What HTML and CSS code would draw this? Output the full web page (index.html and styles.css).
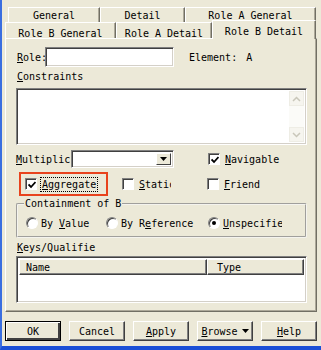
FILE: index.html
```html
<!DOCTYPE html>
<html lang="en">
<head>
    <meta charset="UTF-8">
    <title>Association Properties</title>
    <link rel="stylesheet" href="styles.css">
</head>
<body>
    <div class="window">
        <!-- tab rows -->
        <div class="tabs">
            <div class="tab-row row1">
                <div class="tab w92">General</div>
                <div class="tab w85">Detail</div>
                <div class="tab w131">Role A General</div>
            </div>
            <div class="tab-row row2">
                <div class="tab w111">Role B General</div>
                <div class="tab w96">Role A Detail</div>
                <div class="tab w104 selected">Role B Detail</div>
            </div>
        </div>

        <!-- page -->
        <div class="panel">
            <div class="row role-row">
                <span class="label role-label"><u>R</u>ole:</span>
                <span class="field role-input"></span>
                <span class="element">Element:</span>
                <span class="element-value">A</span>
            </div>

            <div class="caption"><u>C</u>onstraints</div>
            <div class="field memo">
                <div class="scrollbar">
                    <span class="sb-btn">
                        <svg viewBox="0 0 9 6" width="9" height="6"><path d="M1 5 L4.5 1.5 L8 5" fill="none" stroke="#c9c7ba" stroke-width="1.5"/></svg>
                    </span>
                    <span class="sb-btn">
                        <svg viewBox="0 0 9 6" width="9" height="6"><path d="M1 1 L4.5 4.5 L8 1" fill="none" stroke="#c9c7ba" stroke-width="1.5"/></svg>
                    </span>
                </div>
            </div>

            <div class="row multi-row">
                <span class="label multi-label"><u>M</u>ultiplic</span>
                <span class="field combo">
                    <span class="combo-btn">
                        <svg viewBox="0 0 7 4" width="7" height="4"><path d="M0 0 H7 L3.5 4 Z" fill="#000"/></svg>
                    </span>
                </span>
                <span class="checkitem navigable">
                    <span class="check"><svg viewBox="0 0 8 8" width="8" height="8"><path d="M0.5 3.5 L3 6 L7.5 1" fill="none" stroke="#000" stroke-width="1.8"/></svg></span>
                    <span><u>N</u>avigable</span>
                </span>
            </div>

            <div class="row check-row">
                <div class="highlight">
                    <span class="check"><svg viewBox="0 0 8 8" width="8" height="8"><path d="M0.5 3.5 L3 6 L7.5 1" fill="none" stroke="#000" stroke-width="1.8"/></svg></span>
                    <span class="focus"><u>A</u>ggregate</span>
                </div>
                <span class="checkitem static">
                    <span class="check"></span>
                    <span class="clip"><u>S</u>tatic</span>
                </span>
                <span class="checkitem friend">
                    <span class="check"></span>
                    <span><u>F</u>riend</span>
                </span>
            </div>

            <fieldset class="group">
                <legend>Containment of B</legend>
                <div class="radios">
                    <span class="radio-item w80">
                        <span class="radio"></span>
                        <span>By <u>V</u>alue</span>
                    </span>
                    <span class="radio-item w102">
                        <span class="radio"></span>
                        <span>By R<u>e</u>ference</span>
                    </span>
                    <span class="radio-item">
                        <span class="radio on"></span>
                        <span class="clip-long"><u>U</u>nspecified</span>
                    </span>
                </div>
            </fieldset>

            <div class="caption keys"><u>K</u>eys/Qualifie</div>
            <div class="field list">
                <div class="list-head">
                    <span class="col name-col">Name</span>
                    <span class="col type-col">Type</span>
                </div>
            </div>
        </div>

        <!-- buttons -->
        <div class="buttons">
            <span class="button default"><span>OK</span></span>
            <span class="button"><span>Cancel</span></span>
            <span class="button"><span><u>A</u>pply</span></span>
            <span class="button"><span><u>B</u>rowse</span><svg viewBox="0 0 7 4" width="7" height="4"><path d="M0 0 H7 L3.5 4 Z" fill="#000"/></svg></span>
            <span class="button"><span><u>H</u>elp</span></span>
        </div>
    </div>
</body>
</html>
```

FILE: styles.css
```css
body {
    margin: 0;
    padding: 0;
    background: #ece9d8;
}

.window {
    box-sizing: border-box;
    width: 321px;
    height: 350px;
    overflow: hidden;
    border-left: 2px solid #3a6ee0;
    border-bottom: 4px solid #1a4fd6;
    background: #ece9d8;
    font-family: "DejaVu Sans Mono", "Liberation Mono", monospace;
    font-size: 10px;
    color: #000;
    display: flex;
    flex-direction: column;
}

u {
    text-decoration: underline;
    text-underline-offset: 1px;
}

/* tabs */
.tabs {
    padding-top: 7px;
    display: flex;
    flex-direction: column;
}

.tab-row {
    display: flex;
    align-items: flex-end;
}

.row1 {
    margin-left: 6px;
    height: 15px;
}

.row2 {
    margin-left: 3px;
    height: 16px;
    position: relative;
    z-index: 1;
}

.tab {
    box-sizing: border-box;
    height: 100%;
    border-top: 1px solid #fff;
    border-left: 1px solid #fff;
    border-right: 1px solid #716f64;
    box-shadow: inset -1px 0 #aca899;
    display: flex;
    align-items: center;
    justify-content: center;
}

.row2 .tab {
    padding-top: 5px;
}

.tab.selected {
    height: 19px;
    margin-bottom: -1px;
    padding-top: 2px;
    background: #ece9d8;
}

.w92 { width: 92px; }
.w85 { width: 85px; }
.w131 { width: 131px; }
.w111 { width: 111px; }
.w96 { width: 96px; }
.w104 { width: 104px; }

/* page */
.panel {
    box-sizing: border-box;
    margin-left: 3px;
    width: 312px;
    height: 274px;
    border: 1px solid;
    border-color: #fff #716f64 #716f64 #fff;
    box-shadow: inset -1px -1px #aca899;
    padding: 8px 9px 0 10px;
    display: flex;
    flex-direction: column;
}

.row {
    display: flex;
    align-items: center;
}

.field {
    box-sizing: border-box;
    background: #fff;
    border: 1px solid;
    border-color: #808080 #fff #fff #808080;
    box-shadow: inset 1px 1px #404040, inset -1px -1px #d4d0c8;
}

.role-row {
    height: 20px;
}

.role-label {
    width: 28px;
    padding-left: 1px;
}

.role-input {
    width: 129px;
    height: 20px;
}

.element {
    margin-left: 15px;
}

.element-value {
    margin-left: 9px;
}

.caption {
    margin-top: 4px;
    height: 12px;
    line-height: 12px;
    padding-left: 1px;
}

.memo {
    margin-top: 5px;
    height: 57px;
    display: flex;
    justify-content: flex-end;
    padding: 2px;
}

.scrollbar {
    width: 15px;
    display: flex;
    flex-direction: column;
    justify-content: space-between;
    background: #fbfbf8;
}

.sb-btn {
    height: 15px;
    display: flex;
    align-items: center;
    justify-content: center;
    background: #f6f5ef;
    border: 1px solid #eeede5;
    box-sizing: border-box;
}

.multi-row {
    margin-top: 5px;
    height: 18px;
}

.multi-label {
    width: 55px;
}

.combo {
    width: 103px;
    height: 18px;
    display: flex;
    justify-content: flex-end;
    padding: 2px;
}

.combo-btn {
    box-sizing: border-box;
    width: 15px;
    display: flex;
    align-items: center;
    justify-content: center;
    background: #ece9d8;
    border: 1px solid;
    border-color: #fff #404040 #404040 #fff;
}

.checkitem {
    display: flex;
    align-items: center;
    gap: 5px;
}

.check {
    box-sizing: border-box;
    width: 12px;
    height: 12px;
    background: #fff;
    border: 1px solid;
    border-color: #808080 #fff #fff #808080;
    box-shadow: inset 1px 1px #404040;
    display: flex;
    align-items: center;
    justify-content: center;
    padding: 1px 0 0 1px;
}

.navigable {
    margin-left: 34px;
}

.check-row {
    margin-top: 4px;
    height: 24px;
}

.highlight {
    box-sizing: border-box;
    margin-left: 3px;
    width: 89px;
    height: 24px;
    border: 2px solid #e8431d;
    padding-left: 4px;
    display: flex;
    align-items: center;
    gap: 4px;
}

.focus {
    outline: 1px dotted #000;
    padding: 1px 1px;
}

.static {
    margin-left: 14px;
}

.clip {
    width: 32px;
    overflow: hidden;
    white-space: nowrap;
}

.friend {
    margin-left: 36px;
}

/* group box */
.group {
    margin: 2px 0 0 0;
    padding: 0 0 6px 0;
    border: 2px groove #f4f3ee;
    border-radius: 2px;
}

.group legend {
    margin-left: 6px;
    padding: 0 1px;
    line-height: 12px;
}

.radios {
    margin-top: 6px;
    height: 14px;
    display: flex;
    align-items: center;
    padding-left: 8px;
}

.radio-item {
    display: flex;
    align-items: center;
    gap: 3px;
}

.w80 { width: 80px; }
.w102 { width: 102px; }

.radio {
    box-sizing: border-box;
    width: 12px;
    height: 12px;
    border-radius: 50%;
    background: #fff;
    border: 1px solid;
    border-color: #808080 #fff #fff #808080;
    box-shadow: inset 1px 1px #404040;
    display: flex;
    align-items: center;
    justify-content: center;
}

.radio.on::after {
    content: '';
    width: 4px;
    height: 4px;
    border-radius: 50%;
    background: #000;
}

.clip-long {
    width: 59px;
    overflow: hidden;
    white-space: nowrap;
}

.keys {
    margin-top: 4px;
}

.list {
    margin-top: 2px;
    height: 47px;
    padding: 2px;
}

.list-head {
    display: flex;
    height: 16px;
}

.col {
    box-sizing: border-box;
    display: flex;
    align-items: center;
    padding-left: 6px;
    background: #ece9d8;
    border: 1px solid;
    border-color: #fff #404040 #404040 #fff;
    box-shadow: inset -1px -1px #808080;
}

.name-col {
    width: 188px;
}

.type-col {
    flex: 1;
    padding-left: 9px;
}

/* buttons */
.buttons {
    margin: 9px 0 0 3px;
    display: flex;
    gap: 8px;
}

.button {
    box-sizing: border-box;
    width: 56px;
    height: 20px;
    display: flex;
    align-items: center;
    justify-content: center;
    gap: 4px;
    border: 1px solid;
    border-color: #fff #404040 #404040 #fff;
    box-shadow: inset -1px -1px #808080;
}

.button.default {
    border: 1px solid #000;
    box-shadow: inset 1px 1px #fff, inset -2px -2px #404040;
}
```
